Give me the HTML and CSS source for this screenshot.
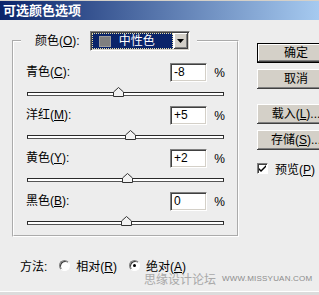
FILE: index.html
```html
<!DOCTYPE html>
<html lang="zh-CN">
<head>
    <meta charset="UTF-8">
    <title>可选颜色选项</title>
    <link rel="stylesheet" href="styles.css">
</head>
<body>
    <div class="dialog">
        <div class="titlebar">可选颜色选项</div>
        <div class="body">
            <div class="left">
                <fieldset class="group">
                    <legend class="group-head">
                        <span class="label">颜色(<u>O</u>):</span>
                        <div class="select">
                            <div class="select-field">
                                <span class="swatch"></span>
                                <span class="select-text">中性色</span>
                            </div>
                            <div class="select-arrow">
                                <svg width="7" height="4" viewBox="0 0 7 4"><path d="M0 0h7L3.5 4z" fill="#000"/></svg>
                            </div>
                        </div>
                    </legend>
                    <div class="rows">
                        <div class="row">
                            <div class="row-head">
                                <span class="row-label">青色(<u>C</u>):</span>
                                <div class="num">-8</div>
                                <span class="pct">%</span>
                            </div>
                            <div class="slider">
                                <div class="track"></div>
                                <svg class="thumb" style="left:46%" width="11" height="10" viewBox="0 0 11 10"><path d="M5.5 .5L10.5 5v4.5H.5V5z" fill="#f2f2f2" stroke="#333"/></svg>
                            </div>
                        </div>
                        <div class="row">
                            <div class="row-head">
                                <span class="row-label">洋红(<u>M</u>):</span>
                                <div class="num">+5</div>
                                <span class="pct">%</span>
                            </div>
                            <div class="slider">
                                <div class="track"></div>
                                <svg class="thumb" style="left:52.5%" width="11" height="10" viewBox="0 0 11 10"><path d="M5.5 .5L10.5 5v4.5H.5V5z" fill="#f2f2f2" stroke="#333"/></svg>
                            </div>
                        </div>
                        <div class="row">
                            <div class="row-head">
                                <span class="row-label">黄色(<u>Y</u>):</span>
                                <div class="num">+2</div>
                                <span class="pct">%</span>
                            </div>
                            <div class="slider">
                                <div class="track"></div>
                                <svg class="thumb" style="left:51%" width="11" height="10" viewBox="0 0 11 10"><path d="M5.5 .5L10.5 5v4.5H.5V5z" fill="#f2f2f2" stroke="#333"/></svg>
                            </div>
                        </div>
                        <div class="row">
                            <div class="row-head">
                                <span class="row-label">黑色(<u>B</u>):</span>
                                <div class="num">0</div>
                                <span class="pct">%</span>
                            </div>
                            <div class="slider">
                                <div class="track"></div>
                                <svg class="thumb" style="left:50%" width="11" height="10" viewBox="0 0 11 10"><path d="M5.5 .5L10.5 5v4.5H.5V5z" fill="#f2f2f2" stroke="#333"/></svg>
                            </div>
                        </div>
                    </div>
                </fieldset>
                <div class="method">
                    <span class="method-label">方法:</span>
                    <span class="radio"></span>
                    <span class="radio-text">相对(<u>R</u>)</span>
                    <span class="radio on"></span>
                    <span class="radio-text">绝对(<u>A</u>)</span>
                </div>
                <div class="watermark">
                    <span class="wm-cn">思缘设计论坛</span>
                    <span class="wm-url">WWW.MISSYUAN.COM</span>
                </div>
            </div>
            <div class="buttons">
                <div class="btn default">确定</div>
                <div class="btn">取消</div>
                <div class="btn gap">载入(<u>L</u>)...</div>
                <div class="btn">存储(<u>S</u>)...</div>
                <div class="check">
                    <span class="check-box">
                        <svg width="7" height="7" viewBox="0 0 7 7"><path d="M0 3l2 2 5-5v2L2 7 0 5z" fill="#000"/></svg>
                    </span>
                    <span class="check-text">预览(<u>P</u>)</span>
                </div>
            </div>
        </div>
    </div>
</body>
</html>
```

FILE: styles.css
```css
* {
    box-sizing: border-box;
}
html, body {
    margin: 0;
    padding: 0;
}
body {
    width: 319px;
    height: 295px;
    overflow: hidden;
    background: #dcdcdc;
    font-family: "Liberation Sans", "Noto Sans CJK SC", sans-serif;
    font-size: 12px;
    color: #000;
}
u {
    text-decoration: underline;
    text-underline-offset: 1px;
}
.dialog {
    height: 292px;
    background: #ededed;
    border-top: 1px solid #d4d0c8;
    border-bottom: 1px solid #fff;
    overflow: hidden;
}
.titlebar {
    height: 19px;
    padding-left: 3px;
    background: linear-gradient(to right, #0a246a, #a6caf0);
    color: #fff;
    font-weight: bold;
    font-size: 13px;
    line-height: 19px;
}
.body {
    display: flex;
    padding-left: 12px;
}
.left {
    width: 227px;
    flex: none;
}

/* group box */
.group {
    margin: 11px 0 0 0;
    padding: 0;
    width: 227px;
    border: 2px groove #fff;
    min-width: 0;
}
.group-head {
    display: flex;
    align-items: center;
    height: 20px;
    margin-left: 7px;
    padding: 0 7px 0 14px;
}
.label {
    line-height: 20px;
}
.select {
    display: flex;
    width: 100px;
    height: 20px;
    margin-left: 10px;
    padding: 1px;
    background: #fff;
    border: 1px solid;
    border-color: #808080 #fff #fff #808080;
    box-shadow: inset 1px 1px #404040, inset -1px -1px #d4d0c8;
}
.select-field {
    flex: 1;
    display: flex;
    align-items: center;
    background: #0a246a;
    border: 1px dotted #e8e0a8;
    color: #fff;
}
.swatch {
    width: 12px;
    height: 11px;
    margin-left: 6px;
    background: #7f7f7f;
    border: 1px solid #9a9a9a;
}
.select-text {
    margin-left: 8px;
    line-height: 14px;
}
.select-arrow {
    width: 14px;
    margin-left: 1px;
    display: flex;
    align-items: center;
    justify-content: center;
    background: #d4d0c8;
    box-shadow: inset -1px -1px #404040, inset 1px 1px #fff, inset -2px -2px #808080;
}

/* rows */
.rows {
    padding: 12px 12px 9px 12px;
}
.row {
    margin-bottom: 9px;
}
.row:last-child {
    margin-bottom: 0;
}
.row-head {
    display: flex;
    align-items: center;
    height: 19px;
}
.row-label {
    width: 147px;
    line-height: 19px;
}
.num {
    width: 38px;
    height: 19px;
    padding-left: 3px;
    background: #fff;
    border: 1px solid;
    border-color: #808080 #fff #fff #808080;
    box-shadow: inset 1px 1px #404040, inset -1px -1px #d4d0c8;
    line-height: 17px;
}
.pct {
    margin-left: 7px;
}
.slider {
    position: relative;
    width: 197px;
    height: 10px;
    margin: 5px 0 0 1px;
    padding-top: 5px;
}
.track {
    height: 4px;
    background: #fff;
    border: 1px solid #2a2a2a;
    border-bottom-color: #555;
}
.thumb {
    position: absolute;
    top: 0;
    margin-left: -5px;
    display: block;
}

/* method */
.method {
    display: flex;
    align-items: center;
    height: 14px;
    margin-top: 21px;
    padding-left: 8px;
}
.method-label {
    margin-right: 12px;
}
.radio {
    position: relative;
    width: 11px;
    height: 11px;
    background: #fff;
    border-radius: 50%;
    border: 1px solid;
    border-color: #808080 #fff #fff #808080;
    box-shadow: inset 1px 1px #404040;
}
.radio.on::after {
    content: '';
    position: absolute;
    left: 3px;
    top: 3px;
    width: 3px;
    height: 3px;
    background: #000;
    border-radius: 50%;
}
.radio-text {
    margin: 0 12px 0 6px;
}
.watermark {
    display: flex;
    align-items: center;
    height: 13px;
    margin-left: 132px;
    white-space: nowrap;
}
.wm-cn {
    color: #a9a9a9;
}
.wm-url {
    margin-left: 6px;
    color: #8c8c8c;
    font-size: 8px;
    letter-spacing: 0.2px;
}

/* buttons */
.buttons {
    flex: none;
    margin-left: 18px;
    padding-top: 23px;
    width: 80px;
}
.btn {
    width: 78px;
    height: 20px;
    margin-bottom: 6px;
    background: #d4d0c8;
    box-shadow: inset -1px -1px #404040, inset 1px 1px #fff, inset -2px -2px #808080;
    text-align: center;
    line-height: 20px;
    white-space: nowrap;
}
.btn.default {
    border: 1px solid #000;
    line-height: 18px;
}
.btn.gap {
    margin-top: 15px;
}
.check {
    display: flex;
    align-items: center;
    margin-top: 11px;
    height: 14px;
}
.check-box {
    display: flex;
    align-items: center;
    justify-content: center;
    width: 11px;
    height: 11px;
    background: #fff;
    border: 1px solid;
    border-color: #808080 #fff #fff #808080;
    box-shadow: inset 1px 1px #404040;
}
.check-text {
    margin-left: 7px;
}
```
